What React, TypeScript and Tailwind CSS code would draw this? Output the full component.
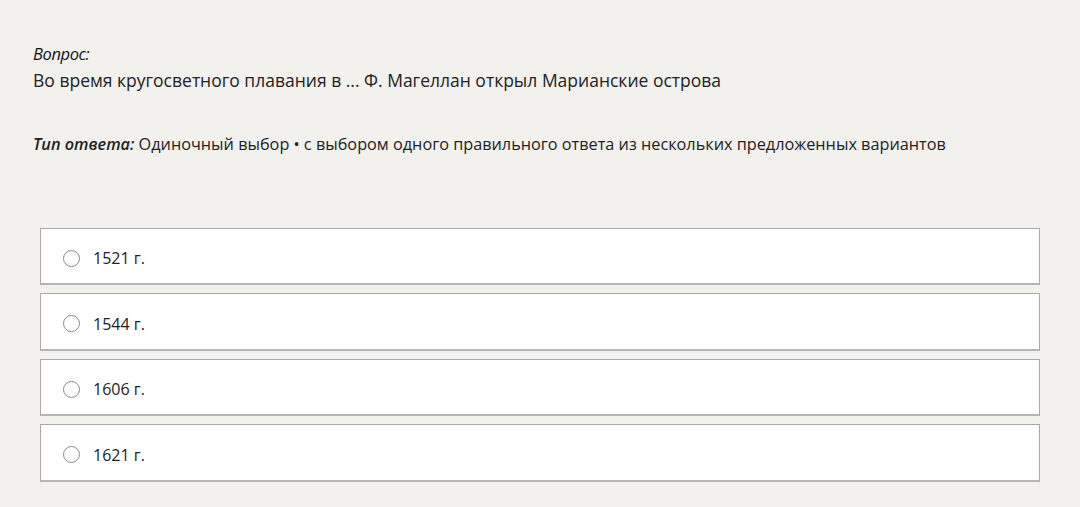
import React from "react";

const options = ["1521 г.", "1544 г.", "1606 г.", "1621 г."];

const App = () => {
    return (
        <div
            className="min-h-[507px] w-full bg-[#f2f1ee] text-[#222]"
            style={{ fontFamily: '"Open Sans", "Noto Sans", sans-serif' }}
        >
            <div className="px-[33px] pt-[43px]">
                <p className="text-[16.5px] italic leading-[22px] tracking-[-0.4px] text-[#111]">Вопрос:</p>
                <p className="mt-[2px] text-[17.5px] leading-[26px]">
                    Во время кругосветного плавания в ... Ф. Магеллан открыл Марианские острова
                </p>
                <p className="mt-[39px] text-[16.25px] leading-[24px]">
                    <span className="font-semibold italic">Тип ответа:</span> Одиночный выбор • с выбором
                    одного правильного ответа из нескольких предложенных вариантов
                </p>
            </div>

            <div className="mt-[71.5px] flex flex-col gap-[8px] pl-[40px] pr-[40px]">
                {options.map((option) => (
                    <div
                        key={option}
                        className="flex h-[57.5px] items-center border border-b-2 border-[#a9a9a9] border-b-[#b5b5b5] bg-white pl-[22px] pt-[5px]"
                    >
                        <span className="h-[17px] w-[17px] rounded-full border border-[#8a8a8a] bg-white" />
                        <span className="ml-[13px] text-[16px]">{option}</span>
                    </div>
                ))}
            </div>
        </div>
    );
};

export default App;
